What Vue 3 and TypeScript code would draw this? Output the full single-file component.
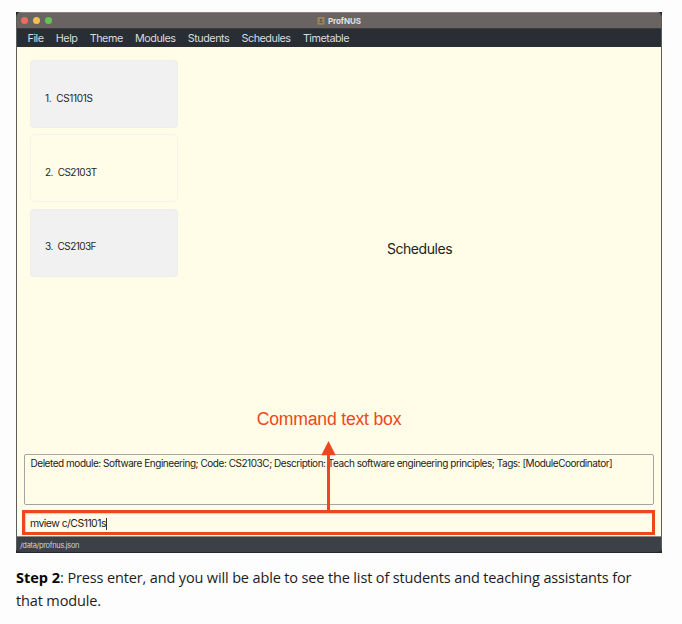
<script setup lang="ts">
interface ModuleItem {
  id: number
  code: string
}

const menus: string[] = ['File', 'Help', 'Theme', 'Modules', 'Students', 'Schedules', 'Timetable']
const modules: ModuleItem[] = [
  { id: 1, code: 'CS1101S' },
  { id: 2, code: 'CS2103T' },
  { id: 3, code: 'CS2103F' },
]
</script>

<template>
  <main class="page">
    <figure class="shot">
      <div class="window">
        <header class="titlebar">
          <div class="lights">
            <span class="light red"></span>
            <span class="light amber"></span>
            <span class="light green"></span>
          </div>
          <svg class="app-icon" viewBox="0 0 8 8" width="8" height="8">
            <rect x="1" y="0.5" width="6" height="6.6" fill="#968157" stroke="#a08b62" stroke-width="0.8" />
            <circle cx="4" cy="2.9" r="1.1" fill="#5f5648" />
            <path d="M2 6 Q4 3.2 6 6 Z" fill="#5f5648" />
          </svg>
          <span class="title">ProfNUS</span>
        </header>
        <nav class="menubar">
          <span v-for="menu in menus" :key="menu">{{ menu }}</span>
        </nav>
        <section class="content">
          <div class="panes">
            <ul class="modules">
              <li v-for="item in modules" :key="item.id" class="card">
                <span>{{ item.id }}.</span>
                <span>{{ item.code }}</span>
              </li>
            </ul>
            <div class="schedules">Schedules</div>
          </div>
          <div class="result">Deleted module: Software Engineering; Code: CS2103C; Description: Teach software engineering principles; Tags: [ModuleCoordinator]</div>
          <div class="command"><span class="typed">mview c/CS1101s</span><i class="caret"></i></div>
        </section>
        <footer class="status">/data/profnus.json</footer>
      </div>
      <div class="callout">
        <span class="callout-text">Command text box</span>
        <svg width="16" height="71" viewBox="0 0 16 71">
          <path d="M7.5 0 L14.7 14.3 H9 V71 H6 V14.3 H0.3 Z" fill="#ee4720" />
        </svg>
      </div>
    </figure>
    <p class="step"><strong>Step 2</strong>: Press enter, and you will be able to see the list of students and teaching assistants for<br />that module.</p>
  </main>
</template>

<style>
body {
  background: #fdfdfd;
}
</style>

<style scoped>
.page {
  box-sizing: border-box;
  height: 624px;
  padding: 12px 20px 0 16px;
  overflow: hidden;
  font-family: Inter, "Liberation Sans", sans-serif;
}
.shot {
  position: relative;
  margin: 0;
  width: 646px;
  height: 541px;
  background: #20252b;
}
.window {
  box-sizing: border-box;
  display: flex;
  flex-direction: column;
  height: 541px;
  border: 1px solid #5d5e59;
  border-top-color: #888482;
  border-bottom-color: #24272c;
  border-radius: 5px;
  overflow: hidden;
}
.titlebar {
  box-sizing: border-box;
  height: 16px;
  flex: none;
  display: flex;
  align-items: center;
  background: #696462;
  border-bottom: 1px solid #3d3b39;
}
.lights {
  display: flex;
  gap: 5px;
  width: 300px;
  padding-left: 4px;
  box-sizing: border-box;
}
.light {
  width: 7px;
  height: 7px;
  border-radius: 50%;
}
.red { background: #ed6b5f; }
.amber { background: #f5bf4f; }
.green { background: #61c554; }
.title {
  margin-left: 3px;
  color: #e4e2e1;
  font-size: 8px;
  font-weight: 700;
  line-height: 14px;
  letter-spacing: -0.1px;
}
.menubar {
  height: 18px;
  flex: none;
  display: flex;
  gap: 12.3px;
  padding-left: 10.5px;
  color: #dadbdc;
  background: #292e34;
  font-size: 10.8px;
  line-height: 19px;
  letter-spacing: -0.48px;
}
.content {
  flex: 1;
  min-height: 0;
  display: flex;
  flex-direction: column;
  background: #fffde7;
}
.panes {
  flex: 1;
  display: flex;
}
.modules {
  width: 148px;
  margin: 0;
  padding: 13px 0 0 13px;
  list-style: none;
}
.card {
  box-sizing: border-box;
  display: flex;
  align-items: center;
  gap: 4.8px;
  height: 68px;
  margin-bottom: 6.3px;
  padding: 7px 0 0 14px;
  border: 1px solid #ededec;
  border-radius: 4px;
  background: #f1f1f1;
  color: #282828;
  font-size: 10px;
  letter-spacing: -0.55px;
}
.card:first-child {
  letter-spacing: -0.3px;
}
.card:nth-child(even) {
  background: #fffde7;
  border-color: #f6f4e5;
}
.schedules {
  flex: 1;
  padding-top: 193px;
  text-align: center;
  color: #222;
  font-size: 14px;
  line-height: 18px;
  letter-spacing: -0.45px;
}
.result {
  box-sizing: border-box;
  height: 51px;
  flex: none;
  margin: 0 7px 5px;
  padding: 2px 5px 0 5.5px;
  border: 1.5px solid #a5a59f;
  border-radius: 2px;
  color: #222;
  font-size: 10px;
  line-height: 13px;
  letter-spacing: -0.46px;
  white-space: nowrap;
}
.command {
  box-sizing: border-box;
  height: 25px;
  flex: none;
  display: flex;
  align-items: center;
  margin: 0 6px 1px 5px;
  padding: 2px 5px 0;
  border: 3px solid #ee4720;
  box-shadow: inset 1px 1px 1px #d6d3c4;
  color: #222;
  font-size: 10.5px;
  letter-spacing: -0.55px;
}
.caret {
  width: 1px;
  height: 12px;
  background: #333;
}
.status {
  flex: none;
  box-sizing: border-box;
  height: 16px;
  padding-left: 3px;
  border-top: 1px solid #8b8b83;
  background: #3c4047;
  color: #d2d3d5;
  font-size: 7.5px;
  line-height: 17px;
  letter-spacing: -0.33px;
}
.callout {
  position: absolute;
  left: 241px;
  top: 397px;
  width: 144px;
  display: flex;
  flex-direction: column;
  align-items: center;
  gap: 12px;
  color: #ee4720;
  font-family: "Liberation Sans", Arial, sans-serif;
  font-size: 17.6px;
  line-height: 20px;
  letter-spacing: -0.2px;
  white-space: nowrap;
}
.step {
  margin: 13px 0 0;
  color: #1c1c1c;
  font-family: "Open Sans", "Noto Sans", sans-serif;
  font-size: 14.5px;
  line-height: 23px;
  letter-spacing: -0.14px;
  white-space: nowrap;
}
.step strong {
  color: #050505;
  letter-spacing: 0;
}
</style>
